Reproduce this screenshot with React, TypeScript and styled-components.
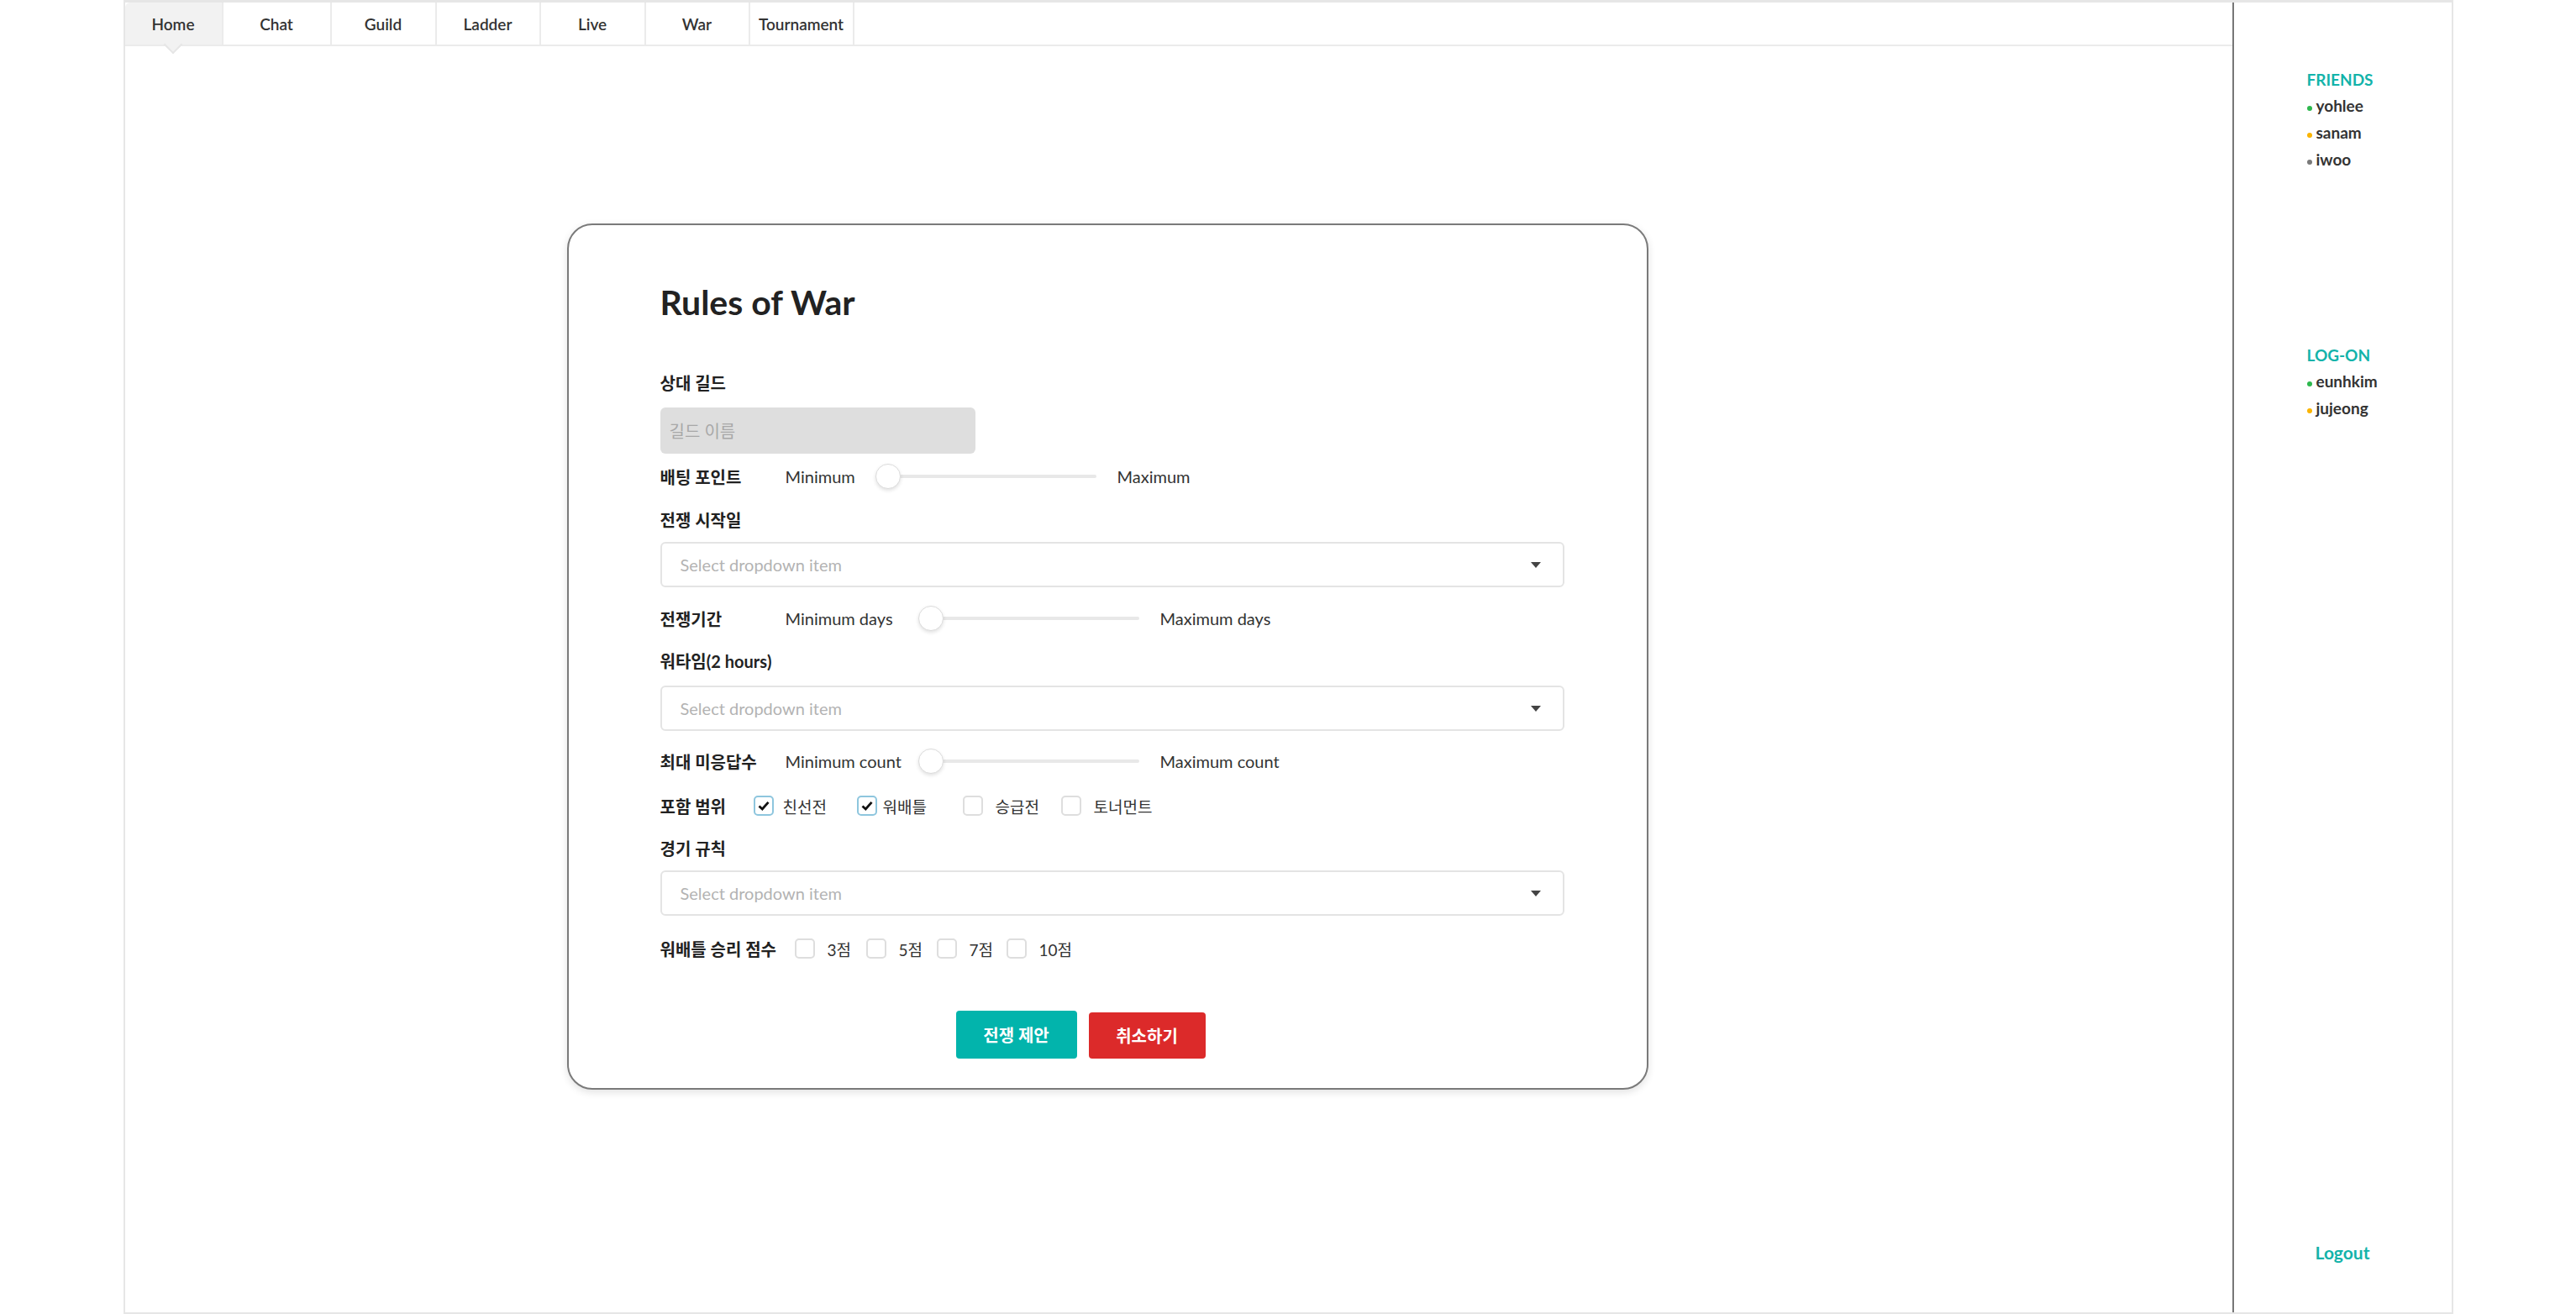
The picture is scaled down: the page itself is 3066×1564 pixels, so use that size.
import React from 'react'
import styled, { createGlobalStyle } from 'styled-components'

const GlobalStyle = createGlobalStyle`
  html, body {
    margin: 0;
    padding: 0;
    background: #fff;
  }
  body {
    font-family: Lato, 'Noto Sans CJK KR', sans-serif;
    color: #222;
  }
  * {
    box-sizing: border-box;
  }
`

const Frame = styled.div`
  width: 2773px;
  height: 1564px;
  margin: 0 auto;
  border: 2px solid #e6e6e6;
  border-top-width: 3px;
  display: flex;
`

const Main = styled.div`
  flex: 1;
  min-width: 0;
  display: flex;
  flex-direction: column;
`

const TabBar = styled.nav`
  display: flex;
  height: 52px;
  flex-shrink: 0;
  border-bottom: 2px solid #ebebeb;
`

const Tab = styled.div<{ $w: number; $active?: boolean }>`
  position: relative;
  width: ${(p) => p.$w}px;
  display: flex;
  align-items: center;
  justify-content: center;
  font-size: 19px;
  font-weight: 600;
  color: #333;
  border-right: 2px solid #ebebeb;
  background: ${(p) => (p.$active ? '#f2f2f2' : '#fff')};
  border-top-left-radius: ${(p) => (p.$active ? '6px' : '0')};

  ${(p) =>
    p.$active &&
    `
    &::after {
      content: '';
      position: absolute;
      left: 50%;
      bottom: -8px;
      width: 14px;
      height: 14px;
      background: #f2f2f2;
      border-right: 2px solid #e6e6e6;
      border-bottom: 2px solid #e6e6e6;
      transform: translateX(-50%) rotate(45deg);
      z-index: 1;
    }
  `}
`

const Content = styled.div`
  flex: 1;
  padding: 211px 0 0 526px;
`

const Card = styled.section`
  width: 1287px;
  border: 2px solid #7a7a7a;
  border-radius: 30px;
  box-shadow: 0 3px 10px rgba(0, 0, 0, 0.12);
  padding: 68px 100px 35px 109px;
  display: flex;
  flex-direction: column;
  background: #fff;
`

const Title = styled.h1`
  margin: 0;
  font-size: 41px;
  line-height: 48px;
  font-weight: 700;
  color: #222;
`

const FieldLabel = styled.div<{ $mt: number }>`
  margin-top: ${(p) => p.$mt}px;
  font-size: 20px;
  line-height: 24px;
  font-weight: 700;
  color: #222;
`

const GuildInput = styled.input`
  width: 375px;
  height: 55px;
  margin-top: 17px;
  border: none;
  border-radius: 6px;
  background: #dedede;
  padding: 0 11px;
  font-family: inherit;
  font-size: 20px;
  color: #333;
  outline: none;

  &::placeholder {
    color: #a8a8a8;
  }
`

const Row = styled.div<{ $mt: number; $h: number }>`
  display: flex;
  align-items: center;
  height: ${(p) => p.$h}px;
  margin-top: ${(p) => p.$mt}px;
`

const RowLabel = styled.div<{ $w: number }>`
  width: ${(p) => p.$w}px;
  flex-shrink: 0;
  font-size: 20px;
  font-weight: 700;
  color: #222;
  white-space: nowrap;
`

const RangeText = styled.span<{ $w?: number }>`
  ${(p) => (p.$w ? `width: ${p.$w}px;` : '')}
  flex-shrink: 0;
  font-size: 20px;
  color: #333;
  white-space: nowrap;
`

const SliderTrack = styled.div`
  position: relative;
  width: 263px;
  height: 30px;
  flex-shrink: 0;
  margin-right: 25px;

  &::before {
    content: '';
    position: absolute;
    left: 15px;
    right: 0;
    top: 13px;
    height: 4px;
    border-radius: 2px;
    background: #e8e8e8;
  }
`

const Thumb = styled.div`
  position: absolute;
  top: 0;
  width: 30px;
  height: 30px;
  border-radius: 50%;
  background: #fff;
  border: 1px solid #dcdcdc;
  box-shadow: 0 2px 4px rgba(0, 0, 0, 0.12);
`

const Dropdown = styled.div<{ $mt: number }>`
  width: 1076px;
  height: 54px;
  margin-top: ${(p) => p.$mt}px;
  border: 2px solid #e4e4e4;
  border-radius: 6px;
  display: flex;
  align-items: center;
  justify-content: space-between;
  padding: 0 26px 0 22px;
  font-size: 20px;
  color: #b3b3b3;
`

const CheckItem = styled.label<{ $w?: number }>`
  display: flex;
  align-items: center;
  ${(p) => (p.$w ? `width: ${p.$w}px;` : '')}
  flex-shrink: 0;
`

const Box = styled.span<{ $checked?: boolean; $gap: number }>`
  width: 24px;
  height: 24px;
  flex-shrink: 0;
  border-radius: 5px;
  border: 2px solid ${(p) => (p.$checked ? '#8ec6de' : '#dedede')};
  background: #fff;
  margin-right: ${(p) => p.$gap}px;
  display: flex;
  align-items: center;
  justify-content: center;
`

const CheckText = styled.span`
  font-size: 19px;
  color: #333;
  white-space: nowrap;
`

const ButtonRow = styled.div`
  display: flex;
  align-items: flex-end;
  gap: 14px;
  margin-top: 62px;
  padding-left: 352px;
`

const ActionButton = styled.button<{ $w: number; $h: number; $bg: string }>`
  width: ${(p) => p.$w}px;
  height: ${(p) => p.$h}px;
  background: ${(p) => p.$bg};
  color: #fff;
  border: none;
  border-radius: 4px;
  font-family: inherit;
  font-size: 20px;
  font-weight: 700;
  cursor: pointer;
`

const Sidebar = styled.aside`
  width: 261px;
  flex-shrink: 0;
  border-left: 2px solid #777;
  display: flex;
  flex-direction: column;
  padding: 80px 0 58px 0;
`

const Section = styled.div<{ $mt: number }>`
  margin-top: ${(p) => p.$mt}px;
  padding-left: 87px;
`

const SectionTitle = styled.div`
  color: #13b3aa;
  font-size: 19px;
  font-weight: 700;
  line-height: 24px;
`

const UserList = styled.ul`
  list-style: none;
  margin: 3px 0 0;
  padding: 0;
`

const UserItem = styled.li`
  display: flex;
  align-items: center;
  font-size: 19px;
  font-weight: 700;
  line-height: 32px;
  color: #333;
`

const Dot = styled.span<{ $color: string }>`
  width: 6px;
  height: 6px;
  border-radius: 50%;
  background: ${(p) => p.$color};
  margin: 5px 5px 0 0;
  flex-shrink: 0;
`

const Logout = styled.div`
  margin-top: auto;
  text-align: center;
  color: #13b3aa;
  font-size: 21px;
  font-weight: 700;
  line-height: 26px;
  cursor: pointer;
`

const tabs = [
  { name: 'Home', w: 117 },
  { name: 'Chat', w: 129 },
  { name: 'Guild', w: 125 },
  { name: 'Ladder', w: 124 },
  { name: 'Live', w: 125 },
  { name: 'War', w: 124 },
  { name: 'Tournament', w: 124 },
]

const statusColor = {
  online: '#2db84d',
  away: '#fbb400',
  offline: '#7a7a7a',
}

const friends = [
  { name: 'yohlee', status: 'online' },
  { name: 'sanam', status: 'away' },
  { name: 'iwoo', status: 'offline' },
] as const

const logon = [
  { name: 'eunhkim', status: 'online' },
  { name: 'jujeong', status: 'away' },
] as const

const Check = () => (
  <svg width="16" height="16" viewBox="0 0 16 16">
    <path d="M2.5 8.5 L6.3 12 L13.5 3.8" fill="none" stroke="#111" strokeWidth="2.8" />
  </svg>
)

const Caret = () => (
  <svg width="12" height="7" viewBox="0 0 12 7">
    <path d="M0 0 H12 L6 7 Z" fill="#444" />
  </svg>
)

const RangeRow = ({ mt, label, min, max, minWidth }) => (
  <Row $mt={mt} $h={30}>
    <RowLabel $w={149}>{label}</RowLabel>
    <RangeText $w={minWidth}>{min}</RangeText>
    <SliderTrack>
      <Thumb style={{ left: 0 }} />
    </SliderTrack>
    <RangeText>{max}</RangeText>
  </Row>
)

const SelectBox = ({ mt = 14 }: { mt?: number }) => (
  <Dropdown $mt={mt}>
    <span>Select dropdown item</span>
    <Caret />
  </Dropdown>
)

const Checkbox = ({
  label,
  checked = false,
  gap,
  width,
}: {
  label: string
  checked?: boolean
  gap: number
  width?: number
}) => (
  <CheckItem $w={width}>
    <Box $checked={checked} $gap={gap}>
      {checked && <Check />}
    </Box>
    <CheckText>{label}</CheckText>
  </CheckItem>
)

export default function App() {
  return (
    <>
      <GlobalStyle />
      <Frame>
        <Main>
          <TabBar>
            {tabs.map((t, i) => (
              <Tab key={t.name} $w={t.w} $active={i === 0}>
                {t.name}
              </Tab>
            ))}
          </TabBar>
          <Content>
            <Card>
              <Title>Rules of War</Title>

              <FieldLabel $mt={60}>상대 길드</FieldLabel>
              <GuildInput placeholder="길드 이름" />

              <RangeRow mt={12} label="배팅 포인트" min="Minimum" max="Maximum" minWidth={107} />

              <FieldLabel $mt={25}>전쟁 시작일</FieldLabel>
              <SelectBox mt={14} />

              <RangeRow mt={22} label="전쟁기간" min="Minimum days" max="Maximum days" minWidth={158} />

              <FieldLabel $mt={24}>워타임(2 hours)</FieldLabel>
              <SelectBox mt={17} />

              <RangeRow mt={21} label="최대 미응답수" min="Minimum count" max="Maximum count" minWidth={158} />

              <Row $mt={26} $h={24}>
                <RowLabel $w={111}>포함 범위</RowLabel>
                <Checkbox label="친선전" checked gap={11} width={123} />
                <Checkbox label="워배틀" checked gap={7} width={126} />
                <Checkbox label="승급전" gap={15} width={117} />
                <Checkbox label="토너먼트" gap={15} />
              </Row>

              <FieldLabel $mt={27}>경기 규칙</FieldLabel>
              <SelectBox mt={14} />

              <Row $mt={27} $h={24}>
                <RowLabel $w={160}>워배틀 승리 점수</RowLabel>
                <Checkbox label="3점" gap={15} width={85} />
                <Checkbox label="5점" gap={15} width={84} />
                <Checkbox label="7점" gap={15} width={83} />
                <Checkbox label="10점" gap={15} />
              </Row>

              <ButtonRow>
                <ActionButton $w={144} $h={57} $bg="#02b4ac">
                  전쟁 제안
                </ActionButton>
                <ActionButton $w={139} $h={55} $bg="#dc2a2a">
                  취소하기
                </ActionButton>
              </ButtonRow>
            </Card>
          </Content>
        </Main>

        <Sidebar>
          <Section $mt={0}>
            <SectionTitle>FRIENDS</SectionTitle>
            <UserList>
              {friends.map((f) => (
                <UserItem key={f.name}>
                  <Dot $color={statusColor[f.status]} />
                  {f.name}
                </UserItem>
              ))}
            </UserList>
          </Section>
          <Section $mt={205}>
            <SectionTitle>LOG-ON</SectionTitle>
            <UserList>
              {logon.map((f) => (
                <UserItem key={f.name}>
                  <Dot $color={statusColor[f.status]} />
                  {f.name}
                </UserItem>
              ))}
            </UserList>
          </Section>
          <Logout>Logout</Logout>
        </Sidebar>
      </Frame>
    </>
  )
}
